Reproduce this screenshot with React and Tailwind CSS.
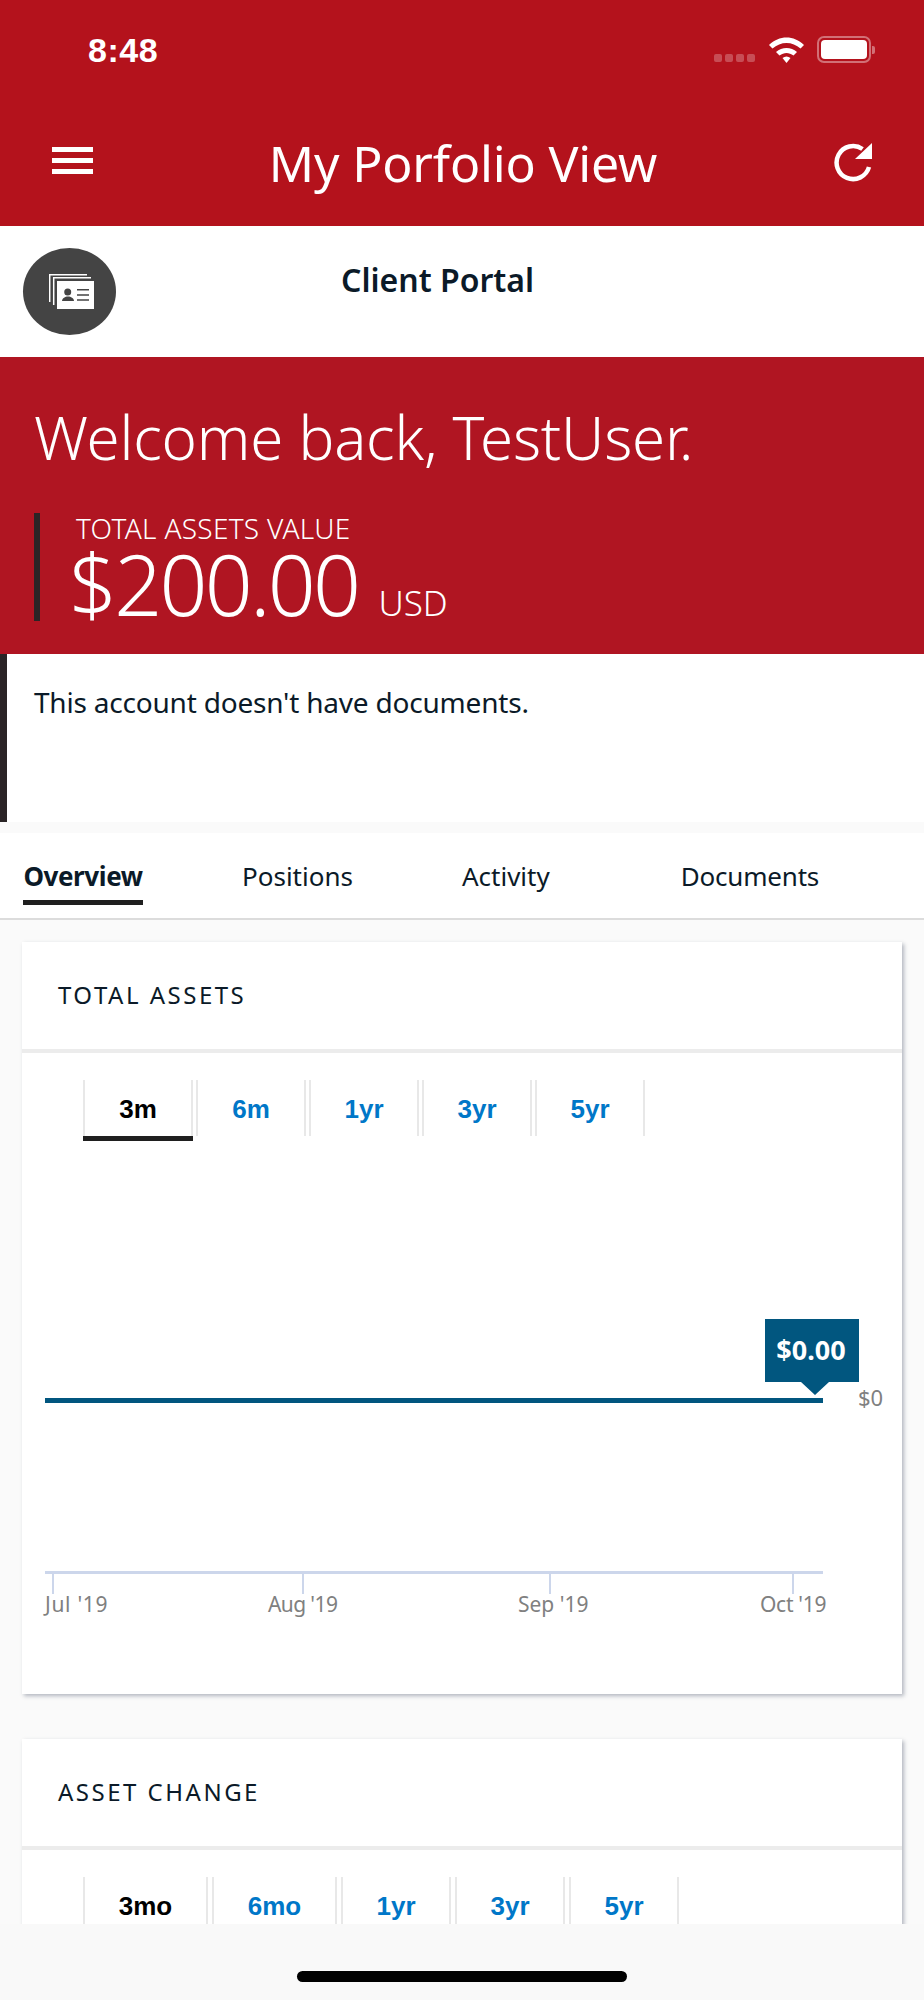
const SANS = "font-['Noto_Sans','Open_Sans',sans-serif]";
const HELV = "font-['Liberation_Sans',Arial,sans-serif]";

const RANGE_ONE = [
    { label: "3m", width: "w-[110px]", active: true },
    { label: "6m", width: "w-[110px]" },
    { label: "1yr", width: "w-[110px]" },
    { label: "3yr", width: "w-[110px]" },
    { label: "5yr", width: "w-[110px]" },
];

const RANGE_TWO = [
    { label: "3mo", width: "w-[125px]", active: true },
    { label: "6mo", width: "w-[125px]" },
    { label: "1yr", width: "w-[110px]" },
    { label: "3yr", width: "w-[110px]" },
    { label: "5yr", width: "w-[110px]" },
];

const X_TICKS = [
    { x: 8, label: "Jul '19", tx: 0, spacing: 0.7 },
    { x: 258, label: "Aug '19", tx: 223, spacing: -0.6 },
    { x: 505, label: "Sep '19", tx: 473, spacing: 0 },
    { x: 748, label: "Oct '19", tx: 715, spacing: -0.3 },
];

function StatusBar() {
    return (
        <div className="h-[98px] flex items-start justify-between pl-[88px] pr-[49px] pt-[30px]">
            <span className={`${HELV} text-[34px] leading-[40px] font-bold text-white tracking-[0.5px]`}>8:48</span>
            <div className="flex items-center pt-[6px]">
                <div className="flex gap-[3px] mt-[16px] mr-[13px]">
                    <div className="w-[8px] h-[8px] rounded-[2px] bg-white/25"></div>
                    <div className="w-[8px] h-[8px] rounded-[2px] bg-white/25"></div>
                    <div className="w-[8px] h-[8px] rounded-[2px] bg-white/25"></div>
                    <div className="w-[8px] h-[8px] rounded-[2px] bg-white/25"></div>
                </div>
                <svg width="37" height="27" viewBox="0 0 37 27" className="mr-[12px]">
                    <path d="M1 9 C11 -1 26 -1 36 9 L32.5 12.5 C24.500 5 12.500 5 4.500 12.500 Z" fill="#fff" />
                    <path d="M8 16 C14 10.500 23 10.500 29 16 L25.500 19.500 C21 16 16 16 11.500 19.500 Z" fill="#fff" />
                    <path d="M14.500 22 C17 20 20 20 22.500 22 L18.500 27 Z" fill="#fff" />
                </svg>
                <div className="w-[54px] h-[27px] rounded-[7px] border-[2px] border-white/40 p-[2px]">
                    <div className="w-full h-full rounded-[4px] bg-white"></div>
                </div>
                <div className="w-[3px] h-[8px] ml-[1px] rounded-r-[2px] bg-white/40"></div>
            </div>
        </div>
    );
}

function NavBar() {
    return (
        <div className="h-[128px] flex items-start justify-between pl-[52px] pr-[51px] pt-[16px]">
            <div className="w-[41px] flex flex-col gap-[6px] mt-[33px]">
                <div className="h-[5px] bg-white"></div>
                <div className="h-[5px] bg-white"></div>
                <div className="h-[5px] bg-white"></div>
            </div>
            <h1 className={`${SANS} mt-[16px] text-[50px] leading-[66px] text-white font-normal tracking-[-0.15px]`}>My Porfolio View</h1>
            <svg width="40" height="40" viewBox="0 0 40 40" className="mt-[28px]">
                <path d="M29.500 7 A16.500 16.500 0 1 0 36 25" fill="none" stroke="#fff" strokeWidth="4.500" />
                <path d="M39 1 L39 17 L22 17 Z" fill="#fff" />
            </svg>
        </div>
    );
}

function PortalRow() {
    return (
        <div className="h-[131px] bg-white flex items-start pl-[23px]">
            <div className="w-[93px] h-[87px] mt-[22px] rounded-[50%] bg-[#444444] flex items-center justify-center">
                <svg width="46" height="36" viewBox="0 0 46 36" className="ml-[5px]">
                    <path d="M0.700 28 V0.700 H38" fill="none" stroke="#fff" strokeWidth="1.500" />
                    <path d="M4.700 31 V3.700 H42" fill="none" stroke="#fff" strokeWidth="1.500" />
                    <rect x="8" y="7" width="37" height="28" fill="#fff" />
                    <circle cx="18.700" cy="18" r="3.500" fill="#444444" />
                    <path d="M13 27 C13.500 21 24.500 21 25 27 Z" fill="#444444" />
                    <path d="M28 15.700 H40 M28 21 H40 M28 26 H40" stroke="#444444" strokeWidth="1.500" />
                </svg>
            </div>
            <h2 className={`${SANS} ml-[225px] mt-[31px] text-[32px] leading-[46px] font-semibold text-[#0b1a28]`}>Client Portal</h2>
        </div>
    );
}

function Welcome() {
    return (
        <div className="h-[297px] bg-[#b01522] pl-[34px] pt-[40px] text-white">
            <p className={`${SANS} text-[60px] leading-[80px] font-light tracking-[-0.22px]`}>Welcome back, TestUser.</p>
            <div className="mt-[36px] h-[108px] flex border-l-[6px] border-[#2a2426] pl-[30px]">
                <div className="flex flex-col">
                    <span className={`${SANS} pl-[6px] text-[28px] leading-[30px] font-light tracking-[0.3px]`}>TOTAL ASSETS VALUE</span>
                    <div className="flex items-baseline -ml-[1px]">
                        <span className={`${SANS} text-[84px] leading-[82px] font-light tracking-[-2.700px]`}>$200.00</span>
                        <span className={`${SANS} ml-[20px] text-[35px] font-light`}>USD</span>
                    </div>
                </div>
            </div>
        </div>
    );
}

function Documents() {
    return (
        <div className="h-[168px] bg-white border-l-[7px] border-[#2a2426] pl-[27px] pt-[28px]">
            <p className={`${SANS} text-[28px] leading-[40px] text-[#0b1a28] tracking-[-0.2px]`}>This account doesn't have documents.</p>
        </div>
    );
}

function MainTabs() {
    return (
        <div className={`${SANS} mt-[11px] h-[87px] bg-white border-b-[2px] border-[#dcdcdc] text-[26px] text-[#0b1a28]`}>
            <div className="flex h-full pt-[21px]">
                <div className="ml-[23px] w-[120px] h-[51px] border-b-[5px] border-[#1f1f1f] font-bold text-center leading-[44px] tracking-[-0.4px]">Overview</div>
                <div className="ml-[99px] leading-[44px]">Positions</div>
                <div className="ml-[109px] leading-[44px]">Activity</div>
                <div className="ml-[131px] leading-[44px] tracking-[-0.2px]">Documents</div>
            </div>
        </div>
    );
}

function RangeTabs({ items, gap }) {
    return (
        <div className={`${HELV} flex ${gap} pl-[61px] pt-[27px] text-[26px] font-bold`}>
            {items.map((item) => (
                <div
                    key={item.label}
                    className={`${item.width} h-[56px] border-x-[2px] border-[#e8e8e8] flex items-center justify-center ${item.active ? "text-black" : "text-[#0077c8]"}`}
                >
                    <span className="mt-[3px]">{item.label}</span>
                </div>
            ))}
        </div>
    );
}

function AssetChart() {
    return (
        <svg width="880" height="558" viewBox="0 0 880 558" className="block">
            <rect x="23" y="262" width="778" height="5" fill="#01567f" />
            <path d="M743 183 H837 V246 H807 L793 259 L779 246 H743 Z" fill="#01567f" />
            <text x="789" y="224" textAnchor="middle" fill="#fff" fontSize="27" fontWeight="700" fontFamily="Noto Sans, sans-serif">$0.00</text>
            <text x="836" y="270" fill="#808080" fontSize="22" fontWeight="400" fontFamily="Noto Sans, sans-serif">$0</text>
            <rect x="23" y="435" width="778" height="3" fill="#ccd6eb" />
            {X_TICKS.map((tick) => (
                <g key={tick.label}>
                    <rect x={tick.x + 22} y="437" width="2" height="21" fill="#ccd6eb" />
                    <text x={tick.tx + 23} y="476" fill="#808080" fontSize="21" fontWeight="400" letterSpacing={tick.spacing} fontFamily="Noto Sans, sans-serif">{tick.label}</text>
                </g>
            ))}
        </svg>
    );
}

function Card({ title, children, className }) {
    return (
        <div className={`mx-[22px] bg-white shadow-[2px_2px_4px_rgba(90,100,120,0.45)] ${className}`}>
            <div className="h-[107px] pl-[36px] pt-[33px]">
                <h3 className={`${SANS} text-[24px] leading-[40px] text-[#0b1a28] tracking-[2.500px]`}>{title}</h3>
            </div>
            <div className="h-[4px] bg-[#ececec]"></div>
            {children}
        </div>
    );
}

export default function App() {
    return (
        <div className="w-[924px] h-[2000px] bg-[#fafafa] flex flex-col overflow-hidden">
            <div className="flex-1 min-h-0 overflow-hidden">
                <div className="bg-[#b4121c]">
                    <StatusBar />
                    <NavBar />
                </div>
                <PortalRow />
                <Welcome />
                <Documents />
                <MainTabs />
                <Card title="TOTAL ASSETS" className="mt-[22px]">
                    <div className="relative">
                        <RangeTabs items={RANGE_ONE} gap="gap-[3px]" />
                        <div className="absolute left-[61px] top-[83px] w-[110px] h-[5px] bg-[#1f1f1f]"></div>
                    </div>
                    <AssetChart />
                </Card>
                <Card title="ASSET CHANGE" className="mt-[45px] h-[400px]">
                    <RangeTabs items={RANGE_TWO} gap="gap-[4px]" />
                </Card>
            </div>
            <div className="h-[76px] bg-[#f9f9f9] flex justify-center pt-[47px]">
                <div className="w-[330px] h-[11px] rounded-full bg-black"></div>
            </div>
        </div>
    );
}
